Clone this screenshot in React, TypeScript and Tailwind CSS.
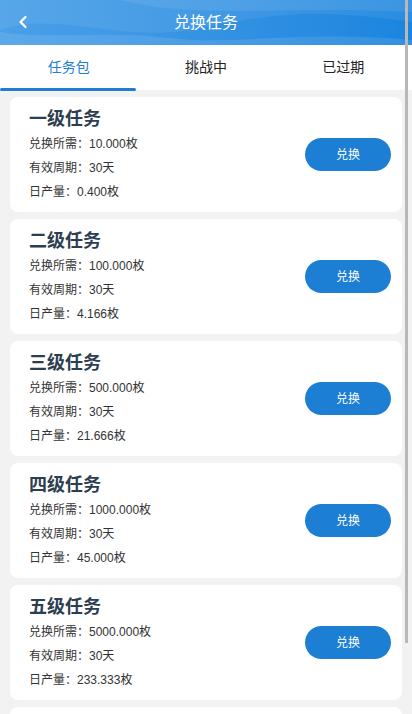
import React from "react";

const tasks = [
  { name: "一级任务", cost: "10.000枚", period: "30天", daily: "0.400枚" },
  { name: "二级任务", cost: "100.000枚", period: "30天", daily: "4.166枚" },
  { name: "三级任务", cost: "500.000枚", period: "30天", daily: "21.666枚" },
  { name: "四级任务", cost: "1000.000枚", period: "30天", daily: "45.000枚" },
  { name: "五级任务", cost: "5000.000枚", period: "30天", daily: "233.333枚" },
];

export default function App() {
  return (
    <div
      className="relative w-[412px] h-[714px] overflow-hidden bg-[#f2f2f2]"
      style={{ fontFamily: '"Liberation Sans", "Noto Sans CJK SC", sans-serif' }}
    >
      {/* Header */}
      <div className="relative h-[45px] bg-gradient-to-r from-[#4aa0e8] to-[#1a85de] overflow-hidden flex items-center justify-center">
        <svg className="absolute inset-0" width="412" height="45" viewBox="0 0 412 45" preserveAspectRatio="none">
          <path d="M0 30 C 60 10, 120 45, 200 28 S 330 10, 412 22 L412 0 L0 0 Z" fill="#ffffff" opacity="0.07" />
          <path d="M0 45 L0 32 C 50 40, 110 30, 170 38 S 300 30, 412 40 L412 45 Z" fill="#ffffff" opacity="0.1" />
          <path d="M120 0 C 200 20, 280 5, 412 12 L412 0 Z" fill="#ffffff" opacity="0.08" />
        </svg>
        <svg className="absolute left-[17px] top-[15px]" width="12" height="14" viewBox="0 0 12 14">
          <path d="M8.5 2 L3.5 7 L8.5 12" fill="none" stroke="#ffffff" strokeWidth="2.2" strokeLinecap="round" strokeLinejoin="round" />
        </svg>
        <span className="relative text-white text-[16px]">兑换任务</span>
      </div>

      {/* Tabs */}
      <div className="grid grid-cols-3 h-[45px] bg-white">
        <div className="relative flex items-center justify-center text-[14px] text-[#1f80d0]">
          任务包
          <div className="absolute left-0 bottom-[-1px] h-[3px] w-[136px] bg-[#1f7ed0] rounded-sm" />
        </div>
        <div className="flex items-center justify-center text-[14px] text-[#222]">挑战中</div>
        <div className="flex items-center justify-center text-[14px] text-[#222]">已过期</div>
      </div>

      {/* List */}
      <div className="flex flex-col gap-[7px] px-[10px] pt-[7px]">
        {tasks.map((t) => (
          <div key={t.name} className="flex items-center justify-between bg-white rounded-[8px] h-[115px] pl-[19px] pr-[11px]">
            <div className="flex flex-col pt-[2px]">
              <div className="text-[18px] font-bold text-[#2c3e50] leading-[22px] mb-[2px]">{t.name}</div>
              <div className="text-[12px] text-[#333] leading-[24px]">兑换所需：{t.cost}</div>
              <div className="text-[12px] text-[#333] leading-[24px]">有效周期：{t.period}</div>
              <div className="text-[12px] text-[#333] leading-[24px]">日产量：{t.daily}</div>
            </div>
            <button className="w-[86px] h-[33px] rounded-full bg-[#1c7fd3] text-white text-[12px]">兑换</button>
          </div>
        ))}
        <div className="bg-white rounded-[8px] h-[115px]" />
      </div>

      {/* Scrollbar overlay */}
      <div className="absolute right-[4px] top-0 w-[3px] h-[643px] bg-[#b8b8b8]" />
    </div>
  );
}
